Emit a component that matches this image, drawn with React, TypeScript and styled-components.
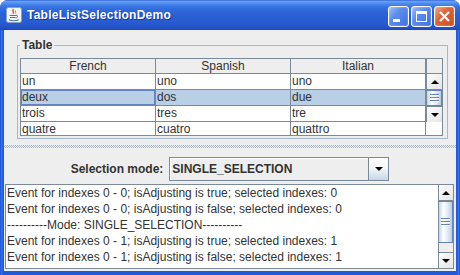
import React from 'react';
import styled, { createGlobalStyle } from 'styled-components';

const GlobalStyle = createGlobalStyle`
  html, body {
    margin: 0;
    padding: 0;
    background: #ffffff;
  }
  body {
    width: 460px;
    height: 275px;
    overflow: hidden;
    font-family: 'Liberation Sans', Arial, sans-serif;
  }
  * {
    box-sizing: border-box;
  }
`;

const Frame = styled.div`
  width: 460px;
  height: 275px;
  display: flex;
  flex-direction: column;
  background: linear-gradient(
    90deg,
    #0b3cc2 0,
    #3a78ec 1px,
    #1f5ade 3px,
    #1f5ade calc(100% - 3px),
    #3a78ec calc(100% - 1px),
    #0b3cc2 100%
  );
  border-radius: 8px 8px 0 0;
  overflow: hidden;
`;

const TitleBar = styled.div`
  height: 30px;
  flex: none;
  display: flex;
  align-items: center;
  padding: 0 5px 0 6px;
  background: linear-gradient(
    180deg,
    #1a4bcc 0,
    #6fa5f5 1px,
    #5390ee 3px,
    #3572e2 7px,
    #2a62d5 13px,
    #285cd1 22px,
    #2452c6 28px,
    #1c46b6 30px
  );
`;

const TitleText = styled.span`
  margin-left: 5px;
  color: #ffffff;
  font-size: 12px;
  font-weight: bold;
  letter-spacing: 0.25px;
  text-shadow: 1px 1px 0 #1337a3;
  white-space: nowrap;
`;

const Controls = styled.div`
  margin-left: auto;
  align-self: flex-start;
  margin-top: 6px;
  display: flex;
  gap: 2px;
`;

const CaptionButton = styled.div<{ $close?: boolean }>`
  width: 21px;
  height: 21px;
  border: 1px solid #ffffff;
  border-radius: 3px;
  display: flex;
  align-items: center;
  justify-content: center;
  background: ${({ $close }) =>
    $close
      ? 'linear-gradient(135deg, #f0a58a 0%, #e0643c 40%, #cf4a22 100%)'
      : 'linear-gradient(135deg, #9cbcf6 0%, #5b8cee 40%, #3c6fe0 100%)'};
  box-shadow: inset 0 0 2px rgba(255, 255, 255, 0.5);
`;

const Body = styled.div`
  flex: 1;
  min-height: 0;
  margin: 0 4px 4px;
  background: #eeeeee;
  display: flex;
  flex-direction: column;
  color: #333333;
  font-size: 12px;
`;

const TopPane = styled.div`
  flex: none;
  padding: 8px 8px 2px 13px;
`;

const TitledBox = styled.fieldset`
  margin: 0;
  min-width: 0;
  border: 1px solid #a3b8cc;
  padding: 6px 4px 2px 2px;
`;

const BoxTitle = styled.legend`
  padding: 0 2px;
  font-size: 12px;
  font-weight: bold;
  line-height: 14px;
  color: #333333;
`;

const ScrollPane = styled.div`
  display: flex;
  border: 1px solid #7a8a99;
  background: #ffffff;
`;

const TableColumns = styled.div`
  flex: 1;
  display: flex;
  flex-direction: column;
  min-width: 0;
`;

const HeaderRow = styled.div`
  display: grid;
  grid-template-columns: 135px 135px 135px;
  height: 15px;
  background: #eeeeee;
`;

const HeaderCell = styled.div`
  border-right: 1px solid #7a8a99;
  border-bottom: 1px solid #7a8a99;
  text-align: center;
  line-height: 14px;
  font-size: 12px;
  color: #333333;
`;

const Viewport = styled.div<{ $height: number }>`
  height: ${({ $height }) => $height}px;
  overflow: hidden;
`;

const Row = styled.div<{ $selected?: boolean }>`
  display: grid;
  grid-template-columns: 135px 135px 135px;
  height: 16px;
  background: ${({ $selected }) => ($selected ? '#b8cfe5' : '#ffffff')};
`;

const Cell = styled.div<{ $focused?: boolean }>`
  border-right: 1px solid #7a8a99;
  border-bottom: 1px solid #7a8a99;
  padding-left: 1px;
  line-height: 15px;
  font-size: 12px;
  color: #333333;
  white-space: nowrap;
  overflow: hidden;
  box-shadow: ${({ $focused }) => ($focused ? 'inset 0 0 0 1px #6382bf' : 'none')};
`;

const SideColumn = styled.div`
  width: 16px;
  flex: none;
  display: flex;
  flex-direction: column;
`;

const Corner = styled.div`
  height: 15px;
  background: #eeeeee;
  border-left: 1px solid #7a8a99;
  border-bottom: 1px solid #7a8a99;
`;

const ScrollTrack = styled.div<{ $width: number }>`
  width: ${({ $width }) => $width}px;
  flex: none;
  display: flex;
  flex-direction: column;
  background: #eeeeee;
  border-left: 1px solid #7a8a99;
`;

const ArrowButton = styled.div<{ $down?: boolean }>`
  height: 16px;
  flex: none;
  display: flex;
  align-items: center;
  justify-content: center;
  background: linear-gradient(135deg, #ffffff 0, #f2f2f2 40%, #e6e6e6 100%);
  border-top: ${({ $down }) => ($down ? '1px solid #7a8a99' : 'none')};
  border-bottom: ${({ $down }) => ($down ? 'none' : '1px solid #7a8a99')};
`;

const Triangle = styled.span<{ $down?: boolean }>`
  width: 0;
  height: 0;
  border-left: 4px solid transparent;
  border-right: 4px solid transparent;
  border-top: ${({ $down }) => ($down ? '4px solid #000000' : 'none')};
  border-bottom: ${({ $down }) => ($down ? 'none' : '4px solid #000000')};
`;

const TrackSpace = styled.div`
  flex: 1;
  display: flex;
  flex-direction: column;
`;

const Thumb = styled.div<{ $size: number }>`
  height: ${({ $size }) => $size}px;
  flex: none;
  border: 1px solid #6382bf;
  border-left: none;
  background: linear-gradient(90deg, #c3d6ee 0, #ffffff 35%, #dce7f4 70%, #b8cfe5 100%);
  display: flex;
  flex-direction: column;
  align-items: center;
  justify-content: center;
  gap: 1px;
`;

const GripLine = styled.span`
  width: 9px;
  height: 1px;
  background: #6382bf;
  box-shadow: 0 1px 0 #ffffff;
  margin-bottom: 1px;
`;

const Divider = styled.div`
  flex: none;
  height: 9px;
  padding-top: 4px;
`;

const DividerDots = styled.div`
  height: 3px;
  background: repeating-conic-gradient(#a9b9c9 0 25%, transparent 0 50%) 0 0 / 2px 2px;
`;

const BottomPane = styled.div`
  flex: 1;
  display: flex;
  flex-direction: column;
  padding-top: 7px;
`;

const ControlRow = styled.div`
  height: 24px;
  display: flex;
  justify-content: center;
  align-items: center;
  gap: 6px;
`;

const FieldLabel = styled.span`
  font-weight: bold;
  font-size: 12px;
  color: #333333;
`;

const Combo = styled.div`
  width: 220px;
  height: 24px;
  display: flex;
  border: 1px solid #7a8a99;
`;

const ComboValue = styled.div`
  flex: 1;
  padding-left: 2px;
  display: flex;
  align-items: center;
  font-weight: bold;
  font-size: 12px;
  color: #333333;
  background: #eeeeee;
  box-shadow: inset 1px 1px 0 #ffffff;
`;

const ComboArrow = styled.div`
  width: 20px;
  flex: none;
  border-left: 1px solid #7a8a99;
  display: flex;
  align-items: center;
  justify-content: center;
  background: linear-gradient(180deg, #ffffff 0, #f4f7fb 45%, #c6d6e8 100%);
`;

const LogPane = styled.div`
  height: 85px;
  margin: 3px 2px 0 1px;
  display: flex;
  border: 1px solid #7a8a99;
  background: #ffffff;
`;

const LogText = styled.div`
  flex: 1;
  min-width: 0;
  overflow: hidden;
  padding-left: 1px;
`;

const LogLine = styled.div`
  height: 16px;
  line-height: 16px;
  font-size: 12px;
  color: #333333;
  white-space: nowrap;
`;

const JavaIcon = () => (
  <svg width="16" height="16" viewBox="0 0 16 16">
    <rect x="0.5" y="0.5" width="15" height="15" rx="2" fill="#f4f4f4" stroke="#8aa1c2" />
    <path d="M7.5 2c-2 1.6 1.2 2.6-.6 4.8" stroke="#e25a1c" strokeWidth="1.5" fill="none" />
    <path d="M9.8 3.6c-1.2 1 .7 1.6-.4 2.9" stroke="#f08a30" strokeWidth="1.1" fill="none" />
    <path d="M3.5 8.5h6.5M4 10.5h5.5" stroke="#4a76a8" strokeWidth="1.1" />
    <path d="M10 8.3c2.2-.4 2.2 2.6-.3 2.6" stroke="#4a76a8" strokeWidth="1" fill="none" />
    <path d="M2.8 12.8c2.6 1.2 7.6 1.2 10 0" stroke="#4a76a8" strokeWidth="1.1" fill="none" />
  </svg>
);

const MinimizeIcon = () => (
  <svg width="19" height="19" viewBox="0 0 19 19">
    <rect x="4" y="12" width="7" height="3" fill="#ffffff" />
  </svg>
);

const MaximizeIcon = () => (
  <svg width="19" height="19" viewBox="0 0 19 19">
    <rect x="4.5" y="4.5" width="10" height="10" fill="none" stroke="#ffffff" />
    <rect x="4" y="4" width="11" height="3" fill="#ffffff" />
  </svg>
);

const CloseIcon = () => (
  <svg width="19" height="19" viewBox="0 0 19 19">
    <path d="M5 5l9 9M14 5l-9 9" stroke="#ffffff" strokeWidth="2.2" />
  </svg>
);

interface ScrollBarProps {
  width: number;
  thumb: number;
}

const ScrollBar: React.FC<ScrollBarProps> = ({ width, thumb }) => (
  <ScrollTrack $width={width}>
    <ArrowButton>
      <Triangle />
    </ArrowButton>
    <TrackSpace>
      <Thumb $size={thumb}>
        <GripLine />
        <GripLine />
        <GripLine />
      </Thumb>
    </TrackSpace>
    <ArrowButton $down>
      <Triangle $down />
    </ArrowButton>
  </ScrollTrack>
);

const rows = [
  ['un', 'uno', 'uno'],
  ['deux', 'dos', 'due'],
  ['trois', 'tres', 'tre'],
  ['quatre', 'cuatro', 'quattro'],
];

const logLines = [
  'Event for indexes 0 - 0; isAdjusting is true; selected indexes: 0',
  'Event for indexes 0 - 0; isAdjusting is false; selected indexes: 0',
  '----------Mode: SINGLE_SELECTION----------',
  'Event for indexes 0 - 1; isAdjusting is true; selected indexes: 1',
  'Event for indexes 0 - 1; isAdjusting is false; selected indexes: 1',
];

const App: React.FC = () => (
  <>
    <GlobalStyle />
    <Frame>
      <TitleBar>
        <JavaIcon />
        <TitleText>TableListSelectionDemo</TitleText>
        <Controls>
          <CaptionButton>
            <MinimizeIcon />
          </CaptionButton>
          <CaptionButton>
            <MaximizeIcon />
          </CaptionButton>
          <CaptionButton $close>
            <CloseIcon />
          </CaptionButton>
        </Controls>
      </TitleBar>
      <Body>
        <TopPane>
          <TitledBox>
            <BoxTitle>Table</BoxTitle>
            <ScrollPane>
              <TableColumns>
                <HeaderRow>
                  <HeaderCell>French</HeaderCell>
                  <HeaderCell>Spanish</HeaderCell>
                  <HeaderCell>Italian</HeaderCell>
                </HeaderRow>
                <Viewport $height={61}>
                  {rows.map((row, i) => (
                    <Row key={row[0]} $selected={i === 1}>
                      {row.map((word, j) => (
                        <Cell key={word + j} $focused={i === 1 && j === 0}>
                          {word}
                        </Cell>
                      ))}
                    </Row>
                  ))}
                </Viewport>
              </TableColumns>
              <SideColumn>
                <Corner />
                <ScrollBar width={16} thumb={16} />
              </SideColumn>
            </ScrollPane>
          </TitledBox>
        </TopPane>
        <Divider>
          <DividerDots />
        </Divider>
        <BottomPane>
          <ControlRow>
            <FieldLabel>Selection mode:</FieldLabel>
            <Combo>
              <ComboValue>SINGLE_SELECTION</ComboValue>
              <ComboArrow>
                <Triangle $down />
              </ComboArrow>
            </Combo>
          </ControlRow>
          <LogPane>
            <LogText>
              {logLines.map((line, i) => (
                <LogLine key={i}>{line}</LogLine>
              ))}
            </LogText>
            <ScrollBar width={15} thumb={42} />
          </LogPane>
        </BottomPane>
      </Body>
    </Frame>
  </>
);

export default App;
